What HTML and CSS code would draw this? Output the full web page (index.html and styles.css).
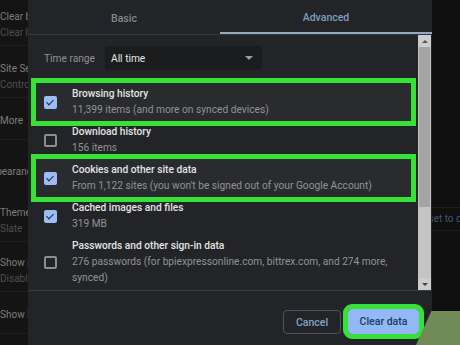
FILE: index.html
```html
<!DOCTYPE html>
<html lang="en">
  <head>
    <meta charset="UTF-8" />
    <title>Clear browsing data</title>
    <link rel="stylesheet" href="styles.css">
  </head>
  <body>
    <div class="page-left">
      <div class="bg-item"><div>Clear browsing data</div><div class="dim">Clear history, cookies</div></div>
      <div class="bg-item"><div>Site Settings</div><div class="dim">Controls what information</div></div>
      <div class="bg-item single"><div>More</div></div>
      <div class="bg-head">Appearance</div>
      <div class="bg-item tight"><div>Themes</div><div class="dim">Slate</div></div>
      <div class="bg-item"><div>Show home button</div><div class="dim">Disabled</div></div>
      <div class="bg-item single"><div>Show bookmarks bar</div></div>
    </div>

    <div class="dialog">
      <div class="tabs">
        <div class="tab basic">Basic</div>
        <div class="tab advanced active">Advanced</div>
      </div>

      <div class="dialog-body">
        <div class="content">
          <div class="time-range">
            <span class="label">Time range</span>
            <div class="select">
              <span>All time</span>
              <span class="caret"></span>
            </div>
          </div>

          <div class="row highlight">
            <span class="checkbox checked"></span>
            <div class="text">
              <div class="title">Browsing history</div>
              <div class="sub">11,399 items (and more on synced devices)</div>
            </div>
          </div>
          <div class="row">
            <span class="checkbox"></span>
            <div class="text">
              <div class="title">Download history</div>
              <div class="sub">156 items</div>
            </div>
          </div>
          <div class="row highlight">
            <span class="checkbox checked"></span>
            <div class="text">
              <div class="title">Cookies and other site data</div>
              <div class="sub">From 1,122 sites (you won't be signed out of your Google Account)</div>
            </div>
          </div>
          <div class="row">
            <span class="checkbox checked"></span>
            <div class="text">
              <div class="title">Cached images and files</div>
              <div class="sub">319 MB</div>
            </div>
          </div>
          <div class="row tall">
            <span class="checkbox"></span>
            <div class="text">
              <div class="title">Passwords and other sign-in data</div>
              <div class="sub">276 passwords (for bpiexpressonline.com, bittrex.com, and 274 more, synced)</div>
            </div>
          </div>
        </div>

        <div class="scrollbar">
          <div class="arrow up"></div>
          <div class="thumb"></div>
          <div class="track"></div>
          <div class="arrow down"></div>
        </div>
      </div>

      <div class="footer">
        <button class="btn cancel">Cancel</button>
        <button class="btn primary">Clear data</button>
      </div>
    </div>

    <div class="page-right">
      <div class="right-link">Reset to default</div>
    </div>

    <div class="photo-corner"></div>
  </body>
</html>
```

FILE: styles.css
```css
* {
  box-sizing: border-box;
  margin: 0;
  padding: 0;
}
body {
  width: 460px;
  height: 345px;
  overflow: hidden;
  display: flex;
  background: #121212;
  font-family: Roboto, "Liberation Sans", sans-serif;
  position: relative;
}

/* page behind the dialog */
.page-left {
  width: 28px;
  overflow: hidden;
  flex-shrink: 0;
  background: #141414;
  color: #7d7d7d;
  font-size: 10px;
  white-space: nowrap;
  padding-top: 9px;
}
.bg-item {
  line-height: 16px;
  padding-bottom: 4px;
  border-bottom: 1px solid #1f1f1f;
  margin-bottom: 15px;
}
.bg-item.single {
  padding-bottom: 10px;
}
.bg-item.tight {
  margin-bottom: 13px;
}
.bg-item .dim {
  color: #4e4e4e;
}
.bg-head {
  line-height: 16px;
  text-indent: -16px;
  margin: 24px 0 25px;
}

.page-right {
  width: 28px;
  flex-shrink: 0;
  background: #0f0f0f;
  padding-top: 207px;
  overflow: hidden;
}
.right-link {
  color: #3f5873;
  font-size: 10px;
  line-height: 22px;
  white-space: nowrap;
  border-top: 1px solid #1c1c1c;
  border-bottom: 1px solid #1c1c1c;
  text-indent: -15px;
}

/* dialog */
.dialog {
  width: 404px;
  flex-shrink: 0;
  background: #232427;
  display: flex;
  flex-direction: column;
}
.tabs {
  display: flex;
  height: 35px;
  border-bottom: 1px solid #37383b;
}
.tab {
  font-size: 10.5px;
  font-weight: 500;
  color: #85888c;
  display: flex;
  align-items: center;
  justify-content: center;
  padding-top: 3px;
}
.tab.basic {
  width: 192px;
}
.tab.advanced {
  flex: 1;
}
.tab.active {
  color: #7f9cc2;
  border-bottom: 2px solid #93a9c2;
}

.dialog-body {
  display: flex;
  height: 255px;
}
.content {
  flex: 1;
  padding: 0 7px 0 8px;
}
.time-range {
  display: flex;
  align-items: center;
  padding: 11px 0 0 8px;
  margin-bottom: 13px;
}
.label {
  width: 61px;
  font-size: 10.2px;
  color: #8e9195;
}
.select {
  width: 157px;
  height: 24px;
  background: #1b1c1e;
  border-radius: 3px;
  display: flex;
  align-items: center;
  justify-content: space-between;
  padding: 0 9px 0 6px;
  font-size: 10.2px;
  color: #e4e5e7;
}
.caret {
  width: 0;
  height: 0;
  border-left: 4px solid transparent;
  border-right: 4px solid transparent;
  border-top: 4px solid #9a9da1;
}

.row {
  display: flex;
  align-items: center;
  height: 38px;
  padding: 3px 0 3px 8px;
}
.row.tall {
  height: 54px;
}
.row.highlight {
  background: #2a2b2e;
  outline: 5px solid #36e236;
}
.checkbox {
  width: 13px;
  height: 13px;
  border: 2px solid #8a8d91;
  border-radius: 2px;
  flex-shrink: 0;
  margin-right: 15px;
  position: relative;
}
.checkbox.checked {
  background: #9dbcf5;
  border-color: #9dbcf5;
}
.checkbox.checked::after {
  content: "";
  position: absolute;
  left: 2px;
  top: 0;
  width: 3px;
  height: 6px;
  border-right: 1.5px solid #1d2a44;
  border-bottom: 1.5px solid #1d2a44;
  transform: rotate(45deg);
}
.text {
  line-height: 16px;
}
.title {
  font-size: 10.2px;
  font-weight: 500;
  color: #e3e4e6;
}
.sub {
  font-size: 10.2px;
  color: #909397;
}

.scrollbar {
  width: 13px;
  display: flex;
  flex-direction: column;
  background: #c4c4c4;
  margin-right: 1px;
}
.arrow {
  height: 12px;
  display: flex;
  align-items: center;
  justify-content: center;
  background: #cdcdcd;
}
.arrow::after {
  content: "";
  border-left: 3px solid transparent;
  border-right: 3px solid transparent;
}
.arrow.up::after {
  border-bottom: 3px solid #555;
}
.arrow.down::after {
  border-top: 3px solid #444;
}
.thumb {
  height: 160px;
  background: #a4a4a4;
  margin: 0 1px;
}
.track {
  flex: 1;
}

.footer {
  flex: 1;
  border-top: 1px solid #3a3b3e;
  display: flex;
  justify-content: flex-end;
  align-items: flex-start;
  padding: 18px 13px 0 0;
  gap: 7px;
}
.btn {
  height: 25px;
  border-radius: 4px;
  font-family: Roboto, "Liberation Sans", sans-serif;
  font-size: 10.5px;
  font-weight: 500;
}
.btn.cancel {
  width: 58px;
  margin-top: 1px;
  height: 24px;
  background: transparent;
  border: 1px solid #4f5257;
  color: #87a3c8;
}
.btn.primary {
  width: 71px;
  background: #92b8f6;
  border: none;
  color: #203a5f;
  outline: 5px solid #36e236;
}

/* corner of the photo frame behind the screenshot */
.photo-corner {
  position: absolute;
  right: 0;
  bottom: 0;
  width: 44px;
  height: 34px;
  background: #6f8b58;
  clip-path: polygon(35% 0, 100% 0, 100% 100%, 0 100%);
}
```
